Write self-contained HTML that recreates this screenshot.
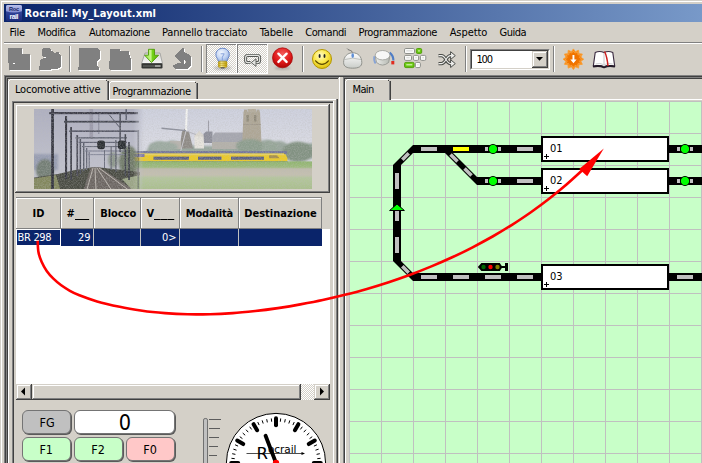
<!DOCTYPE html>
<html lang="it"><head><meta charset="utf-8"><title>Rocrail: My_Layout.xml</title>
<style>
html,body{margin:0;padding:0}
html{overflow:hidden;background:#d4d0c8}
body{width:702px;height:463px;overflow:hidden;position:relative;background:#d4d0c8}
#win{position:absolute;left:0;top:0;width:702px;height:463px;overflow:hidden;background:#d4d0c8;font-family:'DejaVu Sans Condensed','Liberation Sans',sans-serif;font-size:11px;color:#000}
#win>div,#win>span,#win>svg{position:absolute}
.t{white-space:nowrap;line-height:normal}
svg{overflow:visible}
</style></head><body>
<div id="win">
<div style="left:1px;top:1px;width:701px;height:1px;background:#fff;"></div>
<div style="left:1px;top:1px;width:1px;height:462px;background:#fff;"></div>
<div style="left:4px;top:4px;width:990px;height:18px;background:linear-gradient(to right,#0a246a,#a6caf0);"></div>
<span class="t" style="left:24.50px;top:7.00px;font-family:'DejaVu Sans Condensed','Liberation Sans',sans-serif;font-size:11px;font-weight:bold;color:#fff;letter-spacing:0.129px;">Rocrail: My_Layout.xml</span>
<span class="t" style="left:9.50px;top:26.00px;font-family:'DejaVu Sans Condensed','Liberation Sans',sans-serif;font-size:11px;font-weight:normal;color:#000;letter-spacing:-0.328px;">File</span>
<span class="t" style="left:37.60px;top:26.00px;font-family:'DejaVu Sans Condensed','Liberation Sans',sans-serif;font-size:11px;font-weight:normal;color:#000;letter-spacing:-0.425px;">Modifica</span>
<span class="t" style="left:89.00px;top:26.00px;font-family:'DejaVu Sans Condensed','Liberation Sans',sans-serif;font-size:11px;font-weight:normal;color:#000;letter-spacing:-0.405px;">Automazione</span>
<span class="t" style="left:162.00px;top:26.00px;font-family:'DejaVu Sans Condensed','Liberation Sans',sans-serif;font-size:11px;font-weight:normal;color:#000;letter-spacing:-0.183px;">Pannello tracciato</span>
<span class="t" style="left:259.70px;top:26.00px;font-family:'DejaVu Sans Condensed','Liberation Sans',sans-serif;font-size:11px;font-weight:normal;color:#000;letter-spacing:-0.161px;">Tabelle</span>
<span class="t" style="left:305.30px;top:26.00px;font-family:'DejaVu Sans Condensed','Liberation Sans',sans-serif;font-size:11px;font-weight:normal;color:#000;letter-spacing:-0.447px;">Comandi</span>
<span class="t" style="left:358.50px;top:26.00px;font-family:'DejaVu Sans Condensed','Liberation Sans',sans-serif;font-size:11px;font-weight:normal;color:#000;letter-spacing:-0.375px;">Programmazione</span>
<span class="t" style="left:449.70px;top:26.00px;font-family:'DejaVu Sans Condensed','Liberation Sans',sans-serif;font-size:11px;font-weight:normal;color:#000;letter-spacing:-0.085px;">Aspetto</span>
<span class="t" style="left:499.50px;top:26.00px;font-family:'DejaVu Sans Condensed','Liberation Sans',sans-serif;font-size:11px;font-weight:normal;color:#000;letter-spacing:-0.487px;">Guida</span>
<div style="left:4px;top:42px;width:698px;height:1px;background:#808080;"></div>
<div style="left:4px;top:43px;width:698px;height:1px;background:#fff;"></div>
<div style="left:69px;top:46px;width:1px;height:26px;background:#808080;"></div>
<div style="left:70px;top:46px;width:1px;height:26px;background:#fff;"></div>
<div style="left:201px;top:46px;width:1px;height:26px;background:#808080;"></div>
<div style="left:202px;top:46px;width:1px;height:26px;background:#fff;"></div>
<div style="left:302px;top:46px;width:1px;height:26px;background:#808080;"></div>
<div style="left:303px;top:46px;width:1px;height:26px;background:#fff;"></div>
<div style="left:465px;top:46px;width:1px;height:26px;background:#808080;"></div>
<div style="left:466px;top:46px;width:1px;height:26px;background:#fff;"></div>
<div style="left:553px;top:46px;width:1px;height:26px;background:#808080;"></div>
<div style="left:554px;top:46px;width:1px;height:26px;background:#fff;"></div>
<div style="left:4px;top:75px;width:698px;height:1px;background:#808080;"></div>
<div style="left:5px;top:76px;width:697px;height:1px;background:#404040;"></div>
<div style="left:4px;top:75px;width:1px;height:388px;background:#808080;"></div>
<div style="left:5px;top:76px;width:1px;height:387px;background:#404040;"></div>
<div style="left:6px;top:77px;width:333px;height:1px;background:#808080;"></div>
<div style="left:7px;top:78px;width:331px;height:1px;background:#404040;"></div>
<div style="left:6px;top:77px;width:1px;height:386px;background:#808080;"></div>
<div style="left:7px;top:78px;width:1px;height:385px;background:#404040;"></div>
<div style="left:339px;top:77px;width:1px;height:386px;background:#fff;"></div>
<div style="left:343px;top:77px;width:359px;height:1px;background:#808080;"></div>
<div style="left:344px;top:78px;width:358px;height:1px;background:#404040;"></div>
<div style="left:343px;top:77px;width:1px;height:386px;background:#808080;"></div>
<div style="left:344px;top:78px;width:1px;height:385px;background:#404040;"></div>
<div style="left:8px;top:81px;width:1px;height:382px;background:#fff;"></div>
<div style="left:10px;top:79px;width:96px;height:1px;background:#fff;"></div>
<div style="left:9px;top:80px;width:1px;height:1px;background:#fff;"></div>
<div style="left:107px;top:81px;width:1px;height:19px;background:#808080;"></div>
<div style="left:108px;top:81px;width:1px;height:19px;background:#404040;"></div>
<div style="left:106px;top:80px;width:1px;height:1px;background:#404040;"></div>
<span class="t" style="left:15.00px;top:83.00px;font-family:'DejaVu Sans Condensed','Liberation Sans',sans-serif;font-size:11px;font-weight:normal;color:#000;letter-spacing:-0.206px;">Locomotive attive</span>
<div style="left:109px;top:83px;width:1px;height:16px;background:#fff;"></div>
<div style="left:111px;top:81px;width:84px;height:1px;background:#fff;"></div>
<div style="left:110px;top:82px;width:1px;height:1px;background:#fff;"></div>
<div style="left:196px;top:83px;width:1px;height:16px;background:#808080;"></div>
<div style="left:197px;top:83px;width:1px;height:16px;background:#404040;"></div>
<div style="left:195px;top:82px;width:1px;height:1px;background:#404040;"></div>
<span class="t" style="left:112.50px;top:85.00px;font-family:'DejaVu Sans Condensed','Liberation Sans',sans-serif;font-size:11px;font-weight:normal;color:#000;letter-spacing:-0.406px;">Programmazione</span>
<div style="left:109px;top:99px;width:227px;height:1px;background:#fff;"></div>
<div style="left:336px;top:99px;width:1px;height:364px;background:#808080;"></div>
<div style="left:337px;top:99px;width:1px;height:364px;background:#404040;"></div>
<div style="left:12px;top:101px;width:321px;height:1px;background:#808080;"></div>
<div style="left:13px;top:102px;width:320px;height:1px;background:#404040;"></div>
<div style="left:12px;top:101px;width:1px;height:362px;background:#808080;"></div>
<div style="left:13px;top:102px;width:1px;height:361px;background:#404040;"></div>
<div style="left:333px;top:101px;width:1px;height:362px;background:#fff;"></div>
<div style="left:16px;top:105px;width:312px;height:1px;background:#fff;"></div>
<div style="left:16px;top:105px;width:1px;height:86px;background:#fff;"></div>
<div style="left:16px;top:191px;width:314px;height:1px;background:#808080;"></div>
<div style="left:15px;top:192px;width:315px;height:1px;background:#404040;"></div>
<div style="left:328px;top:105px;width:1px;height:87px;background:#808080;"></div>
<div style="left:329px;top:104px;width:1px;height:89px;background:#404040;"></div>
<svg style="left:34px;top:109px" width="278" height="80" viewBox="34 109 278 80" >
<defs>
<linearGradient id="pSkyR" x1="0" y1="0" x2="0" y2="1"><stop offset="0" stop-color="#cdd0de"/><stop offset=".6" stop-color="#d9dae3"/><stop offset="1" stop-color="#d6d8de"/></linearGradient>
<linearGradient id="pSkyL" x1="0" y1="0" x2="0" y2="1"><stop offset="0" stop-color="#adaebf"/><stop offset=".65" stop-color="#bfc0cc"/><stop offset="1" stop-color="#c4c5ce"/></linearGradient>
<linearGradient id="pField" x1="0" y1="0" x2="0" y2="1"><stop offset="0" stop-color="#8fb56c"/><stop offset=".19" stop-color="#9dbb7c"/><stop offset=".25" stop-color="#c0bcae"/><stop offset=".45" stop-color="#c4c0b0"/><stop offset=".55" stop-color="#b4c69c"/><stop offset="1" stop-color="#a8be8a"/></linearGradient>
<linearGradient id="pFade" x1="0" y1="0" x2="1" y2="0"><stop offset="0" stop-color="#fff"/><stop offset=".5" stop-color="#fff"/><stop offset="1" stop-color="#000"/></linearGradient>
<mask id="pMask" maskUnits="userSpaceOnUse" x="34" y="109" width="120" height="80"><rect x="34" y="109" width="92" height="80" fill="#fff"/><rect x="122" y="109" width="22" height="80" fill="url(#pFade)"/></mask>
<filter id="pb" x="-2%" y="-5%" width="104%" height="110%"><feGaussianBlur stdDeviation="0.55"/></filter>
<filter id="pb2" x="-5%" y="-20%" width="110%" height="140%"><feGaussianBlur stdDeviation="1.3"/></filter>
<filter id="grain" x="0" y="0" width="100%" height="100%"><feTurbulence type="fractalNoise" baseFrequency="0.75" numOctaves="2" seed="7" result="n"/><feColorMatrix type="matrix" values="0 0 0 0 0.5  0 0 0 0 0.5  0 0 0 0 0.5  1.6 1.6 1.6 0 -2.05"/></filter>
<clipPath id="pc"><rect x="34" y="109" width="278" height="80"/></clipPath>
</defs>
<g clip-path="url(#pc)">
<g filter="url(#pb)">
<rect x="120" y="105" width="200" height="60" fill="url(#pSkyR)" />
<g filter="url(#pb2)">
<path d="M146,152 L150,144 Q158,139 166,143 Q172,138 180,143 L196,146 L240,146 Q248,138 258,143 Q266,137 274,142 Q282,139 288,145 Q296,140 304,144 L314,143 L314,158 L146,158Z" fill="#98a69c"/>
</g>
<polygon points="179.5,148.5 182,131.5 189,131.5 193,148.5" fill="#8f8b86" />
<polygon points="182,132 185,128.5 188.3,132" fill="#8b8882" />
<line x1="186.8" y1="108" x2="186" y2="131" stroke="#f3f3f1" stroke-width="2.1"/>
<line x1="161.5" y1="128.2" x2="186" y2="130.6" stroke="#8a8d99" stroke-width="1.4"/>
<line x1="186" y1="131" x2="180.5" y2="152" stroke="#c9c9cf" stroke-width="1"/>
<line x1="186" y1="131" x2="197" y2="135" stroke="#b3b3bb" stroke-width="1"/>
<rect x="194.5" y="135.5" width="9.5" height="13" fill="#e7e4dd" />
<polygon points="193.8,136.5 199.3,130.8 204.8,136.5" fill="#dcd8d0" />
<polygon points="203.5,134 206,131.5 212.5,131.5 212.5,143 204,143" fill="#8e8f9a" />
<rect x="170" y="141" width="11" height="8" fill="#b8b4ae" />
<polygon points="212,149 212,137 215,132.5 243,132.5 243,149" fill="#a5a6af" />
<rect x="212" y="142" width="31" height="7" fill="#b3b0a9" />
<line x1="208.5" y1="120.5" x2="208.5" y2="132" stroke="#9c9ca6" stroke-width="1.1"/>
<polygon points="243.5,111.5 260,111.5 261.5,143 242.3,143" fill="#aea695" />
<rect x="244" y="109.6" width="3" height="2.5" fill="#aea695" />
<rect x="256.5" y="109.6" width="3" height="2.5" fill="#aea695" />
<rect x="247.5" y="108.6" width="8.5" height="3.5" fill="#b4ac9b" />
<rect x="246.4" y="115" width="2.4" height="6.5" fill="#8e8878" />
<rect x="254" y="115" width="2.4" height="6.5" fill="#8e8878" />
<rect x="243" y="124" width="18" height="1" fill="#a0988a" />
<g filter="url(#pb2)">
<ellipse cx="250" cy="146" rx="14" ry="7" fill="#8c9d8d"/>
<ellipse cx="270" cy="147" rx="8" ry="6" fill="#96a698"/>
<ellipse cx="298" cy="152" rx="16" ry="10" fill="#829282"/>
<ellipse cx="164" cy="147" rx="14" ry="5" fill="#9caaa0"/>
</g>
<rect x="128" y="151" width="159" height="2.8" fill="#74789a" />
<rect x="128" y="153.6" width="156" height="8" fill="#ecca28" />
<polygon points="283,153.6 285.6,154.6 287.4,158 287.4,161.6 283,161.6" fill="#ecca28" />
<rect x="128" y="153.6" width="156" height="1.6" fill="#e9d35e" />
<rect x="153.5" y="156.6" width="35.5" height="3.2" fill="#5c6082" />
<rect x="198" y="156.6" width="23.5" height="3.2" fill="#5c6082" />
<rect x="231" y="156.6" width="33" height="3.2" fill="#5c6082" />
<rect x="128" y="154" width="16.5" height="3" fill="#7c73a2" />
<polygon points="269,155.2 277,155.2 279.5,158.2 269,158.2" fill="#a58d48" />
<rect x="128" y="161.2" width="160" height="1" fill="#7d8662" />
<rect x="120" y="161.4" width="200" height="30" fill="url(#pField)" />
</g>
<g mask="url(#pMask)"><g filter="url(#pb)">
<rect x="30" y="105" width="120" height="90" fill="url(#pSkyL)" />
<g filter="url(#pb2)">
<rect x="32" y="154" width="26" height="16" fill="#979db2" />
<ellipse cx="45" cy="170" rx="9" ry="11" fill="#737e74"/>
<ellipse cx="129" cy="162" rx="10" ry="16" fill="#6f7a68"/>
<ellipse cx="113" cy="160" rx="5" ry="8" fill="#8d978c"/>
</g>
<polygon points="30,178 58,174 75,170 92,167.5 100,167.5 140,172 140,192 30,192" fill="#494b42" />
<polygon points="30,179 56,175 61,192 30,192" fill="#82875d" />
<polygon points="90.5,167.5 100,167.5 137,192 83,192" fill="#6c6662" />
<polygon points="122,179 140,175 140,192 134,192" fill="#9ba586" />
<line x1="93" y1="168" x2="86.8" y2="190" stroke="#c4beb8" stroke-width="0.9"/>
<line x1="95" y1="168" x2="96" y2="190" stroke="#c4beb8" stroke-width="0.9"/>
<line x1="97" y1="168" x2="111.5" y2="190" stroke="#c4beb8" stroke-width="0.9"/>
<line x1="99" y1="168" x2="128.5" y2="190" stroke="#c4beb8" stroke-width="0.9"/>
<rect x="89.5" y="109" width="3.6" height="30" fill="#9c9bab" />
<rect x="98" y="112" width="1.4" height="22" fill="#9293a3" />
<rect x="51.2" y="109" width="2.7" height="82" fill="#30323c" />
<rect x="49.2" y="112" width="88.8" height="2.2" fill="#3c3e49" />
<rect x="65" y="116" width="2.1" height="63" fill="#373943" />
<rect x="64" y="120.8" width="75" height="1.8" fill="#42444f" />
<rect x="70.2" y="127" width="1.8" height="53" fill="#3f414c" />
<rect x="69.2" y="130.4" width="69.8" height="1.5" fill="#4d4f5b" />
<rect x="76.4" y="135" width="1.7" height="41" fill="#484a56" />
<rect x="75.4" y="137.2" width="51.6" height="1.3" fill="#595c69" />
<rect x="79.6" y="139" width="1.5" height="35" fill="#50525f" />
<rect x="78.6" y="141.8" width="48.4" height="1.2" fill="#626574" />
<rect x="83" y="143" width="1.4" height="28" fill="#595c69" />
<rect x="82" y="146" width="45" height="1.1" fill="#6c6f7e" />
<rect x="86" y="148" width="1.3" height="22" fill="#636675" />
<rect x="85" y="150.5" width="42" height="1" fill="#76798c" />
<rect x="88.6" y="152" width="1.2" height="16" fill="#6e7180" />
<rect x="87.6" y="154.2" width="39.4" height="0.9" fill="#818496" />
<rect x="119.4" y="112" width="1.5" height="40" fill="#4a4c58" />
<rect x="124.6" y="134" width="1.5" height="42" fill="#43454f" />
<rect x="128.2" y="142" width="1.6" height="38" fill="#3e404a" />
<rect x="137.5" y="130" width="1.6" height="62" fill="#4a4c56" />
<rect x="110.6" y="146" width="1.1" height="24" fill="#5e616e" />
<rect x="115.3" y="140" width="1.2" height="32" fill="#595c69" />
<rect x="104" y="150" width="1" height="18" fill="#6a6d7c" />
<line x1="109" y1="114.5" x2="119.7" y2="127.5" stroke="#4d4f5c" stroke-width="0.9"/>
<rect x="125.5" y="109" width="1.4" height="11" fill="#555866" />
<rect x="97.2" y="140.6" width="7.8" height="8.6" rx="2.6" fill="#2c2e33"/>
<rect x="117.8" y="140.4" width="7.8" height="8.6" rx="2.6" fill="#2c2e33"/>
</g></g>
<rect x="34" y="109" width="278" height="80" filter="url(#grain)" opacity="0.3"/>
</g></svg>
<div style="left:16px;top:197px;width:306px;height:1px;background:#808080;"></div>
<div style="left:16px;top:198px;width:44px;height:1px;background:#fff;"></div>
<div style="left:16px;top:198px;width:1px;height:30px;background:#fff;"></div>
<div style="left:60px;top:198px;width:1px;height:31px;background:#808080;"></div>
<div style="left:61px;top:198px;width:32px;height:1px;background:#fff;"></div>
<div style="left:61px;top:198px;width:1px;height:30px;background:#fff;"></div>
<div style="left:93px;top:198px;width:1px;height:31px;background:#808080;"></div>
<div style="left:94px;top:198px;width:46px;height:1px;background:#fff;"></div>
<div style="left:94px;top:198px;width:1px;height:30px;background:#fff;"></div>
<div style="left:140px;top:198px;width:1px;height:31px;background:#808080;"></div>
<div style="left:141px;top:198px;width:38px;height:1px;background:#fff;"></div>
<div style="left:141px;top:198px;width:1px;height:30px;background:#fff;"></div>
<div style="left:179px;top:198px;width:1px;height:31px;background:#808080;"></div>
<div style="left:180px;top:198px;width:58px;height:1px;background:#fff;"></div>
<div style="left:180px;top:198px;width:1px;height:30px;background:#fff;"></div>
<div style="left:238px;top:198px;width:1px;height:31px;background:#808080;"></div>
<div style="left:239px;top:198px;width:82px;height:1px;background:#fff;"></div>
<div style="left:239px;top:198px;width:1px;height:30px;background:#fff;"></div>
<div style="left:321px;top:198px;width:1px;height:31px;background:#808080;"></div>
<div style="left:16px;top:228px;width:306px;height:1px;background:#808080;"></div>
<div style="left:16px;top:229px;width:314px;height:155px;background:#fff;"></div>
<div style="left:16px;top:229px;width:306px;height:17px;background:#0a246a;"></div>
<div style="left:60px;top:229px;width:1px;height:17px;background:#c0c0c0;"></div>
<div style="left:93px;top:229px;width:1px;height:17px;background:#c0c0c0;"></div>
<div style="left:140px;top:229px;width:1px;height:17px;background:#c0c0c0;"></div>
<div style="left:179px;top:229px;width:1px;height:17px;background:#c0c0c0;"></div>
<div style="left:238px;top:229px;width:1px;height:17px;background:#c0c0c0;"></div>
<div style="left:16px;top:229px;width:45px;height:17px;background:transparent;box-sizing:border-box;border:1px solid #fff"></div>
<div style="left:16px;top:384px;width:314px;height:16px;background:#d4d0c8;"></div>
<div style="left:301px;top:384px;width:13px;height:16px;background:repeating-conic-gradient(#fff 0 25%,#d4d0c8 0 50%) 0 0/2px 2px"></div>
<div style="left:16px;top:384px;width:15px;height:1px;background:#d4d0c8;"></div>
<div style="left:16px;top:384px;width:1px;height:15px;background:#d4d0c8;"></div>
<div style="left:17px;top:385px;width:13px;height:1px;background:#fff;"></div>
<div style="left:17px;top:385px;width:1px;height:13px;background:#fff;"></div>
<div style="left:17px;top:398px;width:14px;height:1px;background:#808080;"></div>
<div style="left:30px;top:385px;width:1px;height:14px;background:#808080;"></div>
<div style="left:16px;top:399px;width:16px;height:1px;background:#404040;"></div>
<div style="left:31px;top:384px;width:1px;height:16px;background:#404040;"></div>
<div style="left:32px;top:384px;width:268px;height:1px;background:#d4d0c8;"></div>
<div style="left:32px;top:384px;width:1px;height:15px;background:#d4d0c8;"></div>
<div style="left:33px;top:385px;width:266px;height:1px;background:#fff;"></div>
<div style="left:33px;top:385px;width:1px;height:13px;background:#fff;"></div>
<div style="left:33px;top:398px;width:267px;height:1px;background:#808080;"></div>
<div style="left:299px;top:385px;width:1px;height:14px;background:#808080;"></div>
<div style="left:32px;top:399px;width:269px;height:1px;background:#404040;"></div>
<div style="left:300px;top:384px;width:1px;height:16px;background:#404040;"></div>
<div style="left:314px;top:384px;width:15px;height:1px;background:#d4d0c8;"></div>
<div style="left:314px;top:384px;width:1px;height:15px;background:#d4d0c8;"></div>
<div style="left:315px;top:385px;width:13px;height:1px;background:#fff;"></div>
<div style="left:315px;top:385px;width:1px;height:13px;background:#fff;"></div>
<div style="left:315px;top:398px;width:14px;height:1px;background:#808080;"></div>
<div style="left:328px;top:385px;width:1px;height:14px;background:#808080;"></div>
<div style="left:314px;top:399px;width:16px;height:1px;background:#404040;"></div>
<div style="left:329px;top:384px;width:1px;height:16px;background:#404040;"></div>
<svg style="left:8px;top:380px" width="330" height="83" viewBox="8 380 330 83" >
<polygon points="25,387.5 25,395.5 21,391.5" fill="#000" />
<polygon points="320,387.5 320,395.5 324,391.5" fill="#000" />
<rect x="203.5" y="418.5" width="4" height="50" rx="1.6" fill="#c0c0c0" stroke="#707070" stroke-width="1"/>
<rect x="209" y="419" width="12" height="1" fill="#5c5c5c" shape-rendering="crispEdges"/>
<rect x="209" y="428" width="11" height="1" fill="#5c5c5c" shape-rendering="crispEdges"/>
<rect x="209" y="437" width="10" height="1" fill="#5c5c5c" shape-rendering="crispEdges"/>
<rect x="209" y="446" width="9" height="1" fill="#5c5c5c" shape-rendering="crispEdges"/>
<rect x="209" y="455" width="8" height="1" fill="#5c5c5c" shape-rendering="crispEdges"/>
<circle cx="276" cy="463" r="49.6" fill="#fff" stroke="#000" stroke-width="1"/>
<line x1="276.00" y1="425.20" x2="276.00" y2="418.20" stroke="#000" stroke-width="4" stroke-linecap="round"/>
<line x1="280.34" y1="421.73" x2="280.68" y2="418.45" stroke="#000" stroke-width="1"/>
<line x1="284.63" y1="422.41" x2="285.31" y2="419.18" stroke="#000" stroke-width="1"/>
<line x1="288.82" y1="423.53" x2="289.84" y2="420.39" stroke="#000" stroke-width="1"/>
<line x1="292.88" y1="425.09" x2="294.22" y2="422.07" stroke="#000" stroke-width="1"/>
<line x1="294.90" y1="430.26" x2="298.40" y2="424.20" stroke="#000" stroke-width="4" stroke-linecap="round"/>
<line x1="300.39" y1="429.43" x2="302.33" y2="426.76" stroke="#000" stroke-width="1"/>
<line x1="303.77" y1="432.16" x2="305.98" y2="429.71" stroke="#000" stroke-width="1"/>
<line x1="306.84" y1="435.23" x2="309.29" y2="433.02" stroke="#000" stroke-width="1"/>
<line x1="309.57" y1="438.61" x2="312.24" y2="436.67" stroke="#000" stroke-width="1"/>
<line x1="308.74" y1="444.10" x2="314.80" y2="440.60" stroke="#000" stroke-width="4" stroke-linecap="round"/>
<line x1="313.91" y1="446.12" x2="316.93" y2="444.78" stroke="#000" stroke-width="1"/>
<line x1="315.47" y1="450.18" x2="318.61" y2="449.16" stroke="#000" stroke-width="1"/>
<line x1="316.59" y1="454.37" x2="319.82" y2="453.69" stroke="#000" stroke-width="1"/>
<line x1="317.27" y1="458.66" x2="320.55" y2="458.32" stroke="#000" stroke-width="1"/>
<line x1="313.80" y1="463.00" x2="320.80" y2="463.00" stroke="#000" stroke-width="4" stroke-linecap="round"/>
<line x1="317.27" y1="467.34" x2="320.55" y2="467.68" stroke="#000" stroke-width="1"/>
<line x1="316.59" y1="471.63" x2="319.82" y2="472.31" stroke="#000" stroke-width="1"/>
<line x1="315.47" y1="475.82" x2="318.61" y2="476.84" stroke="#000" stroke-width="1"/>
<line x1="313.91" y1="479.88" x2="316.93" y2="481.22" stroke="#000" stroke-width="1"/>
<line x1="308.74" y1="481.90" x2="314.80" y2="485.40" stroke="#000" stroke-width="4" stroke-linecap="round"/>
<line x1="309.57" y1="487.39" x2="312.24" y2="489.33" stroke="#000" stroke-width="1"/>
<line x1="306.84" y1="490.77" x2="309.29" y2="492.98" stroke="#000" stroke-width="1"/>
<line x1="303.77" y1="493.84" x2="305.98" y2="496.29" stroke="#000" stroke-width="1"/>
<line x1="300.39" y1="496.57" x2="302.33" y2="499.24" stroke="#000" stroke-width="1"/>
<line x1="294.90" y1="495.74" x2="298.40" y2="501.80" stroke="#000" stroke-width="4" stroke-linecap="round"/>
<line x1="292.88" y1="500.91" x2="294.22" y2="503.93" stroke="#000" stroke-width="1"/>
<line x1="288.82" y1="502.47" x2="289.84" y2="505.61" stroke="#000" stroke-width="1"/>
<line x1="284.63" y1="503.59" x2="285.31" y2="506.82" stroke="#000" stroke-width="1"/>
<line x1="280.34" y1="504.27" x2="280.68" y2="507.55" stroke="#000" stroke-width="1"/>
<line x1="276.00" y1="500.80" x2="276.00" y2="507.80" stroke="#000" stroke-width="4" stroke-linecap="round"/>
<line x1="271.66" y1="504.27" x2="271.32" y2="507.55" stroke="#000" stroke-width="1"/>
<line x1="267.37" y1="503.59" x2="266.69" y2="506.82" stroke="#000" stroke-width="1"/>
<line x1="263.18" y1="502.47" x2="262.16" y2="505.61" stroke="#000" stroke-width="1"/>
<line x1="259.12" y1="500.91" x2="257.78" y2="503.93" stroke="#000" stroke-width="1"/>
<line x1="257.10" y1="495.74" x2="253.60" y2="501.80" stroke="#000" stroke-width="4" stroke-linecap="round"/>
<line x1="251.61" y1="496.57" x2="249.67" y2="499.24" stroke="#000" stroke-width="1"/>
<line x1="248.23" y1="493.84" x2="246.02" y2="496.29" stroke="#000" stroke-width="1"/>
<line x1="245.16" y1="490.77" x2="242.71" y2="492.98" stroke="#000" stroke-width="1"/>
<line x1="242.43" y1="487.39" x2="239.76" y2="489.33" stroke="#000" stroke-width="1"/>
<line x1="243.26" y1="481.90" x2="237.20" y2="485.40" stroke="#000" stroke-width="4" stroke-linecap="round"/>
<line x1="238.09" y1="479.88" x2="235.07" y2="481.22" stroke="#000" stroke-width="1"/>
<line x1="236.53" y1="475.82" x2="233.39" y2="476.84" stroke="#000" stroke-width="1"/>
<line x1="235.41" y1="471.63" x2="232.18" y2="472.31" stroke="#000" stroke-width="1"/>
<line x1="234.73" y1="467.34" x2="231.45" y2="467.68" stroke="#000" stroke-width="1"/>
<line x1="238.20" y1="463.00" x2="231.20" y2="463.00" stroke="#000" stroke-width="4" stroke-linecap="round"/>
<line x1="234.73" y1="458.66" x2="231.45" y2="458.32" stroke="#000" stroke-width="1"/>
<line x1="235.41" y1="454.37" x2="232.18" y2="453.69" stroke="#000" stroke-width="1"/>
<line x1="236.53" y1="450.18" x2="233.39" y2="449.16" stroke="#000" stroke-width="1"/>
<line x1="238.09" y1="446.12" x2="235.07" y2="444.78" stroke="#000" stroke-width="1"/>
<line x1="243.26" y1="444.10" x2="237.20" y2="440.60" stroke="#000" stroke-width="4" stroke-linecap="round"/>
<line x1="242.43" y1="438.61" x2="239.76" y2="436.67" stroke="#000" stroke-width="1"/>
<line x1="245.16" y1="435.23" x2="242.71" y2="433.02" stroke="#000" stroke-width="1"/>
<line x1="248.23" y1="432.16" x2="246.02" y2="429.71" stroke="#000" stroke-width="1"/>
<line x1="251.61" y1="429.43" x2="249.67" y2="426.76" stroke="#000" stroke-width="1"/>
<line x1="257.10" y1="430.26" x2="253.60" y2="424.20" stroke="#000" stroke-width="4" stroke-linecap="round"/>
<line x1="259.12" y1="425.09" x2="257.78" y2="422.07" stroke="#000" stroke-width="1"/>
<line x1="263.18" y1="423.53" x2="262.16" y2="420.39" stroke="#000" stroke-width="1"/>
<line x1="267.37" y1="422.41" x2="266.69" y2="419.18" stroke="#000" stroke-width="1"/>
<line x1="271.66" y1="421.73" x2="271.32" y2="418.45" stroke="#000" stroke-width="1"/>
<text x="256.5" y="459" font-family="'DejaVu Sans','Liberation Sans',sans-serif" font-size="16.5" fill="#000">R</text>
<text x="268" y="452.5" font-family="'DejaVu Sans','Liberation Sans',sans-serif" font-size="10.5" fill="#000" textLength="28.5">ocrail</text>
<line x1="246.5" y1="453.5" x2="303" y2="453.5" stroke="#000" stroke-width="0.7"/>
<polygon points="305,453.5 301.5,452.1 301.5,454.9" fill="#000" />
<line x1="276" y1="463" x2="265.6" y2="435.8" stroke="#000" stroke-width="3.8" stroke-linecap="round"/>
<circle cx="276" cy="463" r="3.2" fill="#ff0000"/>
</svg>
<div style="left:22px;top:410px;width:49px;height:24px;background:#c0c0c0;box-sizing:border-box;border:1px solid #747474;border-radius:6px;box-shadow:1px 1px 0 #5a5a5a"></div>
<div style="left:74px;top:410px;width:101px;height:24px;background:#fff;box-sizing:border-box;border:1px solid #747474;border-radius:6px;box-shadow:1px 1px 0 #5a5a5a"></div>
<div style="left:22px;top:437px;width:49px;height:24px;background:#c8ffc8;box-sizing:border-box;border:1px solid #747474;border-radius:6px;box-shadow:1px 1px 0 #5a5a5a"></div>
<div style="left:74px;top:437px;width:49px;height:24px;background:#c8ffc8;box-sizing:border-box;border:1px solid #747474;border-radius:6px;box-shadow:1px 1px 0 #5a5a5a"></div>
<div style="left:126px;top:437px;width:49px;height:24px;background:#ffc8c8;box-sizing:border-box;border:1px solid #747474;border-radius:6px;box-shadow:1px 1px 0 #5a5a5a"></div>
<span class="t" style="left:39.41px;top:415.00px;font-family:'DejaVu Sans Condensed','Liberation Sans',sans-serif;font-size:12.5px;font-weight:normal;color:#000;">FG</span>
<span class="t" style="left:39.39px;top:442.00px;font-family:'DejaVu Sans Condensed','Liberation Sans',sans-serif;font-size:12.5px;font-weight:normal;color:#000;">F1</span>
<span class="t" style="left:91.29px;top:442.00px;font-family:'DejaVu Sans Condensed','Liberation Sans',sans-serif;font-size:12.5px;font-weight:normal;color:#000;">F2</span>
<span class="t" style="left:143.19px;top:442.00px;font-family:'DejaVu Sans Condensed','Liberation Sans',sans-serif;font-size:12.5px;font-weight:normal;color:#000;">F0</span>
<span class="t" style="left:118.64px;top:410.00px;font-family:'DejaVu Sans Condensed','Liberation Sans',sans-serif;font-size:21.5px;font-weight:normal;color:#000;">0</span>
<div style="left:345px;top:81px;width:1px;height:382px;background:#fff;"></div>
<div style="left:347px;top:79px;width:41px;height:1px;background:#fff;"></div>
<div style="left:346px;top:80px;width:1px;height:1px;background:#fff;"></div>
<div style="left:389px;top:81px;width:1px;height:19px;background:#808080;"></div>
<div style="left:390px;top:81px;width:1px;height:19px;background:#404040;"></div>
<div style="left:388px;top:80px;width:1px;height:1px;background:#404040;"></div>
<div style="left:391px;top:99px;width:311px;height:1px;background:#fff;"></div>
<span class="t" style="left:352.50px;top:83.00px;font-family:'DejaVu Sans Condensed','Liberation Sans',sans-serif;font-size:11px;font-weight:normal;color:#000;letter-spacing:-0.647px;">Main</span>
<svg style="left:349px;top:101px" width="353" height="362" viewBox="349 101 353 362" >
<g shape-rendering="crispEdges">
<rect x="349" y="101" width="353" height="362" fill="#c8ffc8" />
<rect x="349" y="101" width="1" height="362" fill="#c0c0c0" />
<rect x="381" y="101" width="1" height="362" fill="#c0c0c0" />
<rect x="413" y="101" width="1" height="362" fill="#c0c0c0" />
<rect x="445" y="101" width="1" height="362" fill="#c0c0c0" />
<rect x="477" y="101" width="1" height="362" fill="#c0c0c0" />
<rect x="509" y="101" width="1" height="362" fill="#c0c0c0" />
<rect x="541" y="101" width="1" height="362" fill="#c0c0c0" />
<rect x="573" y="101" width="1" height="362" fill="#c0c0c0" />
<rect x="605" y="101" width="1" height="362" fill="#c0c0c0" />
<rect x="637" y="101" width="1" height="362" fill="#c0c0c0" />
<rect x="669" y="101" width="1" height="362" fill="#c0c0c0" />
<rect x="701" y="101" width="1" height="362" fill="#c0c0c0" />
<rect x="349" y="101" width="353" height="1" fill="#c0c0c0" />
<rect x="349" y="133" width="353" height="1" fill="#c0c0c0" />
<rect x="349" y="165" width="353" height="1" fill="#c0c0c0" />
<rect x="349" y="197" width="353" height="1" fill="#c0c0c0" />
<rect x="349" y="229" width="353" height="1" fill="#c0c0c0" />
<rect x="349" y="261" width="353" height="1" fill="#c0c0c0" />
<rect x="349" y="293" width="353" height="1" fill="#c0c0c0" />
<rect x="349" y="325" width="353" height="1" fill="#c0c0c0" />
<rect x="349" y="357" width="353" height="1" fill="#c0c0c0" />
<rect x="349" y="389" width="353" height="1" fill="#c0c0c0" />
<rect x="349" y="421" width="353" height="1" fill="#c0c0c0" />
<rect x="349" y="453" width="353" height="1" fill="#c0c0c0" />
</g>
<polygon points="541,145 413,145 393,165 393,261 413,281 541,281 541,273 413,273 401,261 401,165 413,153 541,153" fill="#000" />
<polygon points="445,153 453,153 477,177 541,177 541,185 477,185" fill="#000" />
<rect x="669" y="145" width="33" height="8" fill="#000" shape-rendering="crispEdges"/>
<rect x="669" y="177" width="33" height="8" fill="#000" shape-rendering="crispEdges"/>
<rect x="669" y="273" width="33" height="8" fill="#000" shape-rendering="crispEdges"/>
<g shape-rendering="crispEdges">
<rect x="421" y="147" width="16" height="4" fill="#c0c0c0" />
<rect x="517" y="147" width="16" height="4" fill="#c0c0c0" />
<rect x="453" y="147" width="16" height="4" fill="#ffff00" />
<rect x="517" y="179" width="16" height="4" fill="#c0c0c0" />
<rect x="421" y="275" width="16" height="4" fill="#c0c0c0" />
<rect x="453" y="275" width="16" height="4" fill="#c0c0c0" />
<rect x="485" y="275" width="16" height="4" fill="#c0c0c0" />
<rect x="517" y="275" width="16" height="4" fill="#c0c0c0" />
<rect x="677" y="275" width="16" height="4" fill="#c0c0c0" />
<rect x="395" y="173" width="4" height="16" fill="#c0c0c0" />
<rect x="395" y="211" width="4" height="10" fill="#c0c0c0" />
<rect x="395" y="237" width="4" height="16" fill="#c0c0c0" />
<rect x="485" y="147" width="3" height="4" fill="#c0c0c0" />
<rect x="498" y="147" width="3" height="4" fill="#c0c0c0" />
<rect x="485" y="179" width="3" height="4" fill="#c0c0c0" />
<rect x="498" y="179" width="3" height="4" fill="#c0c0c0" />
<rect x="677" y="147" width="3" height="4" fill="#c0c0c0" />
<rect x="690" y="147" width="3" height="4" fill="#c0c0c0" />
<rect x="677" y="179" width="3" height="4" fill="#c0c0c0" />
<rect x="690" y="179" width="3" height="4" fill="#c0c0c0" />
</g>
<line x1="402.3" y1="159.7" x2="408.7" y2="153.3" stroke="#c0c0c0" stroke-width="3.6"/>
<line x1="402.3" y1="266.3" x2="408.7" y2="272.7" stroke="#c0c0c0" stroke-width="3.6"/>
<line x1="450.5" y1="154.5" x2="457.5" y2="161.5" stroke="#c0c0c0" stroke-width="3.6"/>
<line x1="464.5" y1="168.5" x2="471.5" y2="175.5" stroke="#c0c0c0" stroke-width="3.6"/>
<circle cx="493" cy="149" r="4.6" fill="#00ff00" stroke="#000" stroke-width="0.9"/>
<circle cx="493" cy="181" r="4.6" fill="#00ff00" stroke="#000" stroke-width="0.9"/>
<circle cx="685" cy="149" r="4.6" fill="#00ff00" stroke="#000" stroke-width="0.9"/>
<circle cx="685" cy="181" r="4.6" fill="#00ff00" stroke="#000" stroke-width="0.9"/>
<polygon points="397,204 389.6,210.5 404.4,210.5" fill="#00ff00" stroke="#000" stroke-width="1"/>
<polygon points="477.8,267 481.4,263 499.8,263 502.4,267 499.8,271 481.4,271" fill="#000" />
<rect x="501" y="266" width="5" height="2" fill="#000" />
<rect x="505" y="263" width="3" height="8" fill="#000" />
<circle cx="483.5" cy="267" r="2.2" fill="#006400"/>
<circle cx="490.5" cy="267" r="2.2" fill="#ff0000"/>
<circle cx="497.5" cy="267" r="2.2" fill="#808000"/>
<rect x="542" y="137" width="126" height="24" fill="#fff" stroke="#000" stroke-width="2" shape-rendering="crispEdges"/>
<rect x="544" y="156" width="5" height="1" fill="#000" shape-rendering="crispEdges"/>
<rect x="546" y="154" width="1" height="5" fill="#000" shape-rendering="crispEdges"/>
<rect x="542" y="169" width="126" height="24" fill="#fff" stroke="#000" stroke-width="2" shape-rendering="crispEdges"/>
<rect x="544" y="188" width="5" height="1" fill="#000" shape-rendering="crispEdges"/>
<rect x="546" y="186" width="1" height="5" fill="#000" shape-rendering="crispEdges"/>
<rect x="542" y="265" width="126" height="24" fill="#fff" stroke="#000" stroke-width="2" shape-rendering="crispEdges"/>
<rect x="544" y="284" width="5" height="1" fill="#000" shape-rendering="crispEdges"/>
<rect x="546" y="282" width="1" height="5" fill="#000" shape-rendering="crispEdges"/>
<text x="550" y="152" font-family="'DejaVu Sans Condensed','Liberation Sans',sans-serif" font-size="11" fill="#000">01</text>
<text x="550" y="184" font-family="'DejaVu Sans Condensed','Liberation Sans',sans-serif" font-size="11" fill="#000">02</text>
<text x="550" y="280" font-family="'DejaVu Sans Condensed','Liberation Sans',sans-serif" font-size="11" fill="#000">03</text>
</svg>
<span class="t" style="left:32.55px;top:207.00px;font-family:'DejaVu Sans Condensed','Liberation Sans',sans-serif;font-size:11px;font-weight:bold;color:#000;">ID</span>
<span class="t" style="left:66.40px;top:207.00px;font-family:'DejaVu Sans Condensed','Liberation Sans',sans-serif;font-size:11px;font-weight:bold;color:#000;">#<span style="display:inline-block;transform:scaleX(1.44);transform-origin:0 50%">__</span></span>
<span class="t" style="left:100.20px;top:207.00px;font-family:'DejaVu Sans Condensed','Liberation Sans',sans-serif;font-size:11px;font-weight:bold;color:#000;letter-spacing:-0.053px;">Blocco</span>
<span class="t" style="left:146.50px;top:207.00px;font-family:'DejaVu Sans Condensed','Liberation Sans',sans-serif;font-size:11px;font-weight:bold;color:#000;">V<span style="display:inline-block;transform:scaleX(1.36);transform-origin:0 50%">___</span></span>
<span class="t" style="left:185.75px;top:207.00px;font-family:'DejaVu Sans Condensed','Liberation Sans',sans-serif;font-size:11px;font-weight:bold;color:#000;letter-spacing:-0.158px;">Modalità</span>
<span class="t" style="left:244.25px;top:207.00px;font-family:'DejaVu Sans Condensed','Liberation Sans',sans-serif;font-size:11px;font-weight:bold;color:#000;letter-spacing:0.010px;">Destinazione</span>
<span class="t" style="left:17.60px;top:231.00px;font-family:'DejaVu Sans Condensed','Liberation Sans',sans-serif;font-size:11px;font-weight:normal;color:#fff;letter-spacing:-0.341px;">BR 298</span>
<span class="t" style="left:77.91px;top:231.00px;font-family:'DejaVu Sans Condensed','Liberation Sans',sans-serif;font-size:11px;font-weight:normal;color:#fff;">29</span>
<span class="t" style="left:161.91px;top:231.00px;font-family:'DejaVu Sans Condensed','Liberation Sans',sans-serif;font-size:11px;font-weight:normal;color:#fff;">0></span>
<div style="left:470px;top:49px;width:80px;height:21px;background:#fff;box-sizing:border-box;border:1px solid;border-color:#808080 #fff #fff #808080"></div>
<div style="left:471px;top:50px;width:78px;height:19px;background:#fff;box-sizing:border-box;border:1px solid;border-color:#404040 #d4d0c8 #d4d0c8 #404040"></div>
<div style="left:532px;top:51px;width:16px;height:17px;background:#d4d0c8;"></div>
<div style="left:532px;top:51px;width:15px;height:1px;background:#d4d0c8;"></div>
<div style="left:532px;top:51px;width:1px;height:16px;background:#d4d0c8;"></div>
<div style="left:533px;top:52px;width:13px;height:1px;background:#fff;"></div>
<div style="left:533px;top:52px;width:1px;height:14px;background:#fff;"></div>
<div style="left:533px;top:66px;width:14px;height:1px;background:#808080;"></div>
<div style="left:546px;top:52px;width:1px;height:15px;background:#808080;"></div>
<div style="left:532px;top:67px;width:16px;height:1px;background:#404040;"></div>
<div style="left:547px;top:51px;width:1px;height:17px;background:#404040;"></div>
<span class="t" style="left:476.50px;top:53.00px;font-family:'DejaVu Sans Condensed','Liberation Sans',sans-serif;font-size:11px;font-weight:normal;color:#000;letter-spacing:-1.195px;">100</span>
<svg style="left:6px;top:5px" width="16" height="16" viewBox="6 5 16 16" >
<defs><linearGradient id="tiA" x1="0" y1="0" x2="0" y2="1"><stop offset="0" stop-color="#b9c0ea"/><stop offset="1" stop-color="#7f8bd0"/></linearGradient>
<linearGradient id="tiB" x1="0" y1="0" x2="0" y2="1"><stop offset="0" stop-color="#3f55ad"/><stop offset="1" stop-color="#1c2c7c"/></linearGradient></defs>
<rect x="6" y="5" width="16" height="16" rx="1.6" fill="url(#tiB)"/>
<path d="M6,6.6 Q6,5 7.6,5 L20.4,5 Q22,5 22,6.6 L22,11.2 Q14,13.6 6,11.2Z" fill="url(#tiA)"/>
<text x="14" y="11" font-family="'Liberation Sans',sans-serif" font-weight="bold" font-size="5.6" fill="#1a2466" text-anchor="middle" textLength="10">Roc</text>
<text x="14" y="19" font-family="'Liberation Sans',sans-serif" font-weight="bold" font-size="7" fill="#f4f6ff" text-anchor="middle" textLength="9">rail</text>
</svg>
<svg style="left:0px;top:44px" width="702" height="31" viewBox="0 44 702 31" >
<defs>
<linearGradient id="gArrow" x1="0" y1="0" x2="1" y2="0"><stop offset="0" stop-color="#8ae234"/><stop offset=".45" stop-color="#c9f58f"/><stop offset=".55" stop-color="#73d216"/><stop offset="1" stop-color="#5cb40c"/></linearGradient>
<linearGradient id="gDrive" x1="0" y1="0" x2="0" y2="1"><stop offset="0" stop-color="#d6d6d4"/><stop offset="1" stop-color="#f6f6f5"/></linearGradient>
<radialGradient id="gBulb" cx=".4" cy=".35" r=".7"><stop offset="0" stop-color="#f4f8ff"/><stop offset=".6" stop-color="#c3d4f2"/><stop offset="1" stop-color="#8fabdf"/></radialGradient>
<linearGradient id="gBase" x1="0" y1="0" x2="1" y2="0"><stop offset="0" stop-color="#c4a000"/><stop offset=".35" stop-color="#fdf2a0"/><stop offset="1" stop-color="#c4a000"/></linearGradient>
<radialGradient id="gRed" cx=".5" cy=".3" r=".75"><stop offset="0" stop-color="#f25a5a"/><stop offset=".55" stop-color="#e01b1b"/><stop offset="1" stop-color="#a40000"/></radialGradient>
<radialGradient id="gSmile" cx=".42" cy=".32" r=".75"><stop offset="0" stop-color="#fffbd0"/><stop offset=".45" stop-color="#fce94f"/><stop offset="1" stop-color="#d9b800"/></radialGradient>
<linearGradient id="gMouse" x1="0" y1="0" x2="0" y2="1"><stop offset="0" stop-color="#ffffff"/><stop offset="1" stop-color="#c9ccc8"/></linearGradient>
<linearGradient id="gKnob" x1="0" y1="0" x2="1" y2="0"><stop offset="0" stop-color="#eeefec"/><stop offset="1" stop-color="#b4b7b0"/></linearGradient>
<linearGradient id="gGreen" x1="0" y1="0" x2="0" y2="1"><stop offset="0" stop-color="#73d216"/><stop offset="1" stop-color="#5fbf0c"/></linearGradient>
<radialGradient id="gStar" cx=".5" cy=".5" r=".55"><stop offset="0" stop-color="#e86c00"/><stop offset=".7" stop-color="#f57900"/><stop offset="1" stop-color="#f98e1c"/></radialGradient>
<pattern id="chk" width="2" height="2" patternUnits="userSpaceOnUse"><rect width="2" height="2" fill="#d4d0c8"/><rect width="1" height="1" fill="#fff"/><rect x="1" y="1" width="1" height="1" fill="#fff"/></pattern>
<filter id="b1"><feGaussianBlur stdDeviation="0.8"/></filter>
</defs>
<path d="M8,48 L22,48 L22,54 L30,54 L30,70 L9,70 L9,64 L8,63Z M13,63 L15,63 L15,64 L13,64Z" fill="#fff" fill-rule="evenodd" transform="translate(1,1)" shape-rendering="crispEdges"/><path d="M8,48 L22,48 L22,54 L30,54 L30,70 L9,70 L9,64 L8,63Z M13,63 L15,63 L15,64 L13,64Z" fill="#808080" fill-rule="evenodd" shape-rendering="crispEdges"/>
<path d="M43,48 L50,48 L50,49 L51,49 L51,51 L53,51 L53,52 L54,52 L54,53 L56,53 L56,52 L59,52 L59,54 L60,54 L60,55 L61,55 L61,67 L60,67 L60,68 L58,68 L58,69 L51,69 L51,70 L39,70 L39,66 L40,66 L40,60 L41,60 L41,59 L43,59 L43,58 L46,58 L46,57 L43,57 L43,56 L42,56 L42,49 L43,49Z" fill="#fff" fill-rule="evenodd" transform="translate(1,1)" shape-rendering="crispEdges"/><path d="M43,48 L50,48 L50,49 L51,49 L51,51 L53,51 L53,52 L54,52 L54,53 L56,53 L56,52 L59,52 L59,54 L60,54 L60,55 L61,55 L61,67 L60,67 L60,68 L58,68 L58,69 L51,69 L51,70 L39,70 L39,66 L40,66 L40,60 L41,60 L41,59 L43,59 L43,58 L46,58 L46,57 L43,57 L43,56 L42,56 L42,49 L43,49Z" fill="#808080" fill-rule="evenodd" shape-rendering="crispEdges"/>
<path d="M79,48 L97,48 L100,51 L100,58 L97,61 L97,66 L99,68 L99,70 L78,70 L78,67 L79,66Z" fill="#fff" fill-rule="evenodd" transform="translate(1,1)" shape-rendering="crispEdges"/><path d="M79,48 L97,48 L100,51 L100,58 L97,61 L97,66 L99,68 L99,70 L78,70 L78,67 L79,66Z" fill="#808080" fill-rule="evenodd" shape-rendering="crispEdges"/>
<path d="M110,49 L120,49 L120,51 L129,51 L129,53 L131,60 L131,69 L130,70 L110,70 L109,69 L109,61 L110,60Z" fill="#fff" fill-rule="evenodd" transform="translate(1,1)" shape-rendering="crispEdges"/><path d="M110,49 L120,49 L120,51 L129,51 L129,53 L131,60 L131,69 L130,70 L110,70 L109,69 L109,61 L110,60Z" fill="#808080" fill-rule="evenodd" shape-rendering="crispEdges"/>
<polygon points="145,53 160,53 162.5,63.5 141.5,63.5" fill="url(#gDrive)" stroke="#9a9a98" stroke-width="0.8"/>
<rect x="141.5" y="63.3" width="21" height="5.2" rx="1.2" fill="#353634"/>
<rect x="143" y="65.5" width="18" height="1" fill="#6e706c" />
<rect x="155" y="65.3" width="5.5" height="1.4" fill="#b8bab6" />
<polygon points="148.5,49.3 154.5,49.3 154.5,55.2 158.6,55.2 151.5,62.6 144.6,55.2 148.5,55.2" fill="url(#gArrow)" stroke="#4e9a06" stroke-width="0.9" stroke-linejoin="round"/>
<path d="M182,48 L184,48 L184,52 L188,54 L191,57 L191,65 L188,69 L175,69 L172,66 L178,63 L181.5,63 L174,56Z M184,60 L184,64 L186.5,62Z" fill="#fff" fill-rule="evenodd" transform="translate(1,1)" shape-rendering="crispEdges"/><path d="M182,48 L184,48 L184,52 L188,54 L191,57 L191,65 L188,69 L175,69 L172,66 L178,63 L181.5,63 L174,56Z M184,60 L184,64 L186.5,62Z" fill="#808080" fill-rule="evenodd" shape-rendering="crispEdges"/>
<rect x="206" y="44" width="31" height="30" fill="url(#chk)" shape-rendering="crispEdges"/>
<rect x="206" y="44" width="31" height="1" fill="#808080" shape-rendering="crispEdges"/>
<rect x="206" y="44" width="1" height="29" fill="#808080" shape-rendering="crispEdges"/>
<rect x="206" y="73" width="31" height="1" fill="#fff" shape-rendering="crispEdges"/>
<rect x="236" y="44" width="1" height="30" fill="#fff" shape-rendering="crispEdges"/>
<rect x="237" y="44" width="31" height="30" fill="url(#chk)" shape-rendering="crispEdges"/>
<rect x="237" y="44" width="31" height="1" fill="#808080" shape-rendering="crispEdges"/>
<rect x="237" y="44" width="1" height="29" fill="#808080" shape-rendering="crispEdges"/>
<rect x="237" y="73" width="31" height="1" fill="#fff" shape-rendering="crispEdges"/>
<rect x="267" y="44" width="1" height="30" fill="#fff" shape-rendering="crispEdges"/>
<ellipse cx="222.5" cy="68" rx="9" ry="2" fill="#888" opacity=".45" filter="url(#b1)"/>
<path d="M222.6,48.3 C226.6,48.3 229.3,51 229.3,54.6 C229.3,57.5 227.2,59 226.9,61.5 L218.4,61.5 C218.1,59 215.9,57.5 215.9,54.6 C215.9,51 218.6,48.3 222.6,48.3Z" fill="url(#gBulb)" stroke="#5b7bbf" stroke-width="0.9"/>
<path d="M220.6,53.8 L224.2,53.8 L222.3,57.2 L222.3,60.5" fill="none" stroke="#7d9ad8" stroke-width="0.9"/>
<rect x="218.4" y="61.2" width="8.5" height="6.2" rx="1.4" fill="url(#gBase)" stroke="#b09000" stroke-width="0.6"/>
<line x1="218.6" y1="63.2" x2="226.7" y2="63.2" stroke="#a88a00" stroke-width="0.7"/>
<line x1="218.6" y1="65.2" x2="226.7" y2="65.2" stroke="#a88a00" stroke-width="0.7"/>
<rect x="220.6" y="67.2" width="4" height="1.3" fill="#555"/>
<path d="M250.5,62.6 L247.8,62.6 Q245.6,62.6 245.6,60.4 L245.6,57.6 Q245.6,55.4 247.8,55.4 L257.4,55.4 Q259.6,55.4 259.6,57.6 L259.6,60.4 Q259.6,62.6 257.4,62.6 L255.5,62.6" fill="none" stroke="#555753" stroke-width="3"/>
<path d="M250.5,62.6 L247.8,62.6 Q245.6,62.6 245.6,60.4 L245.6,57.6 Q245.6,55.4 247.8,55.4 L257.4,55.4 Q259.6,55.4 259.6,57.6 L259.6,60.4 Q259.6,62.6 257.4,62.6 L255.5,62.6" fill="none" stroke="#e4e5e2" stroke-width="1.1"/>
<polygon points="256,58.8 256,66.4 251.2,62.6" fill="#e4e5e2" stroke="#555753" stroke-width="0.9" stroke-linejoin="round"/>
<ellipse cx="282.5" cy="68.2" rx="8" ry="1.6" fill="#666" opacity=".35" filter="url(#b1)"/>
<circle cx="282.5" cy="57.8" r="10" fill="url(#gRed)" stroke="#a40000" stroke-width="0.7"/>
<path d="M278.4,53.7 L286.6,61.9 M286.6,53.7 L278.4,61.9" stroke="#fff" stroke-width="2.4" stroke-linecap="round"/>
<circle cx="322" cy="59" r="9.5" fill="url(#gSmile)" stroke="#b39600" stroke-width="1"/>
<ellipse cx="319.6" cy="56" rx="1" ry="1.9" fill="#222"/><ellipse cx="324.5" cy="56" rx="1" ry="1.9" fill="#222"/>
<path d="M315.6,60.8 Q322,68 328.4,60.8" fill="none" stroke="#5c4a00" stroke-width="1.2" stroke-linecap="round"/>
<path d="M347.2,48.6 C349,51.2 352.2,49.4 352.6,53.5" fill="none" stroke="#555" stroke-width="0.8"/>
<path d="M343.6,62.5 C343.6,56.5 347.5,52.8 352.7,52.8 C357.9,52.8 361.8,56.5 361.8,62.5 C361.8,66.5 358.8,68.2 352.7,68.2 C346.6,68.2 343.6,66.5 343.6,62.5Z" fill="url(#gMouse)" stroke="#888a85" stroke-width="0.9"/>
<path d="M344.5,59.6 Q352.7,56.6 361,59.6" fill="none" stroke="#b5b8b2" stroke-width="0.8"/>
<ellipse cx="352.7" cy="55.6" rx="1.3" ry="2.4" fill="#5f8fd6"/>
<path d="M374.4,56.2 A9.5,9.5 0 0 0 375.6,63.6" fill="none" stroke="#86a3d6" stroke-width="1.8"/>
<path d="M389.6,52.6 A10,10 0 0 1 393.4,60.4" fill="none" stroke="#4f7dc6" stroke-width="2.1"/>
<rect x="391.3" y="61" width="3" height="3.4" fill="#e02b1f" />
<path d="M375.2,55.6 L376.5,62.4 Q382.5,67.8 388.7,62.4 L389.9,55.6Z" fill="url(#gKnob)" stroke="#8f918c" stroke-width="0.8"/>
<ellipse cx="382.55" cy="55.2" rx="7.35" ry="4.7" fill="#f7f7f6" stroke="#999b96" stroke-width="0.8"/>
<rect x="404.5" y="48.5" width="10" height="5" rx="1.3" fill="#fbfbfa" stroke="#8e908b" stroke-width="1"/><rect x="406.3" y="50.3" width="6.4" height="1.1" fill="#d8d9d6"/>
<rect x="416.3" y="48.5" width="5.4" height="5" rx="1.3" fill="url(#gGreen)" stroke="#4e9a06" stroke-width="0.9"/><rect x="418.1" y="50.3" width="1.8000000000000003" height="1.2" fill="#d7f5b0"/>
<rect x="404.5" y="55.4" width="7" height="5" rx="1.3" fill="#fbfbfa" stroke="#8e908b" stroke-width="1"/><rect x="406.3" y="57.199999999999996" width="3.4" height="1.1" fill="#d8d9d6"/>
<rect x="413.4" y="55.4" width="5.2" height="5" rx="1.3" fill="#fbfbfa" stroke="#8e908b" stroke-width="1"/><rect x="415.2" y="57.199999999999996" width="1.6" height="1.1" fill="#d8d9d6"/>
<rect x="420.4" y="55.4" width="5.4" height="5" rx="1.3" fill="#fbfbfa" stroke="#8e908b" stroke-width="1"/><rect x="422.2" y="57.199999999999996" width="1.8000000000000003" height="1.1" fill="#d8d9d6"/>
<rect x="404.5" y="62.4" width="9.6" height="5.2" rx="1.3" fill="url(#gGreen)" stroke="#4e9a06" stroke-width="0.9"/><rect x="406.3" y="64.2" width="6.0" height="1.2" fill="#d7f5b0"/>
<rect x="415.4" y="62.4" width="5" height="5.2" rx="1.3" fill="#fbfbfa" stroke="#8e908b" stroke-width="1"/><rect x="417.2" y="64.2" width="1.4" height="1.1" fill="#d8d9d6"/>
<path d="M438.5,55.6 L441.5,55.6 C446,55.6 446,63.6 450.5,63.6 L452,63.6" fill="none" stroke="#4b4d49" stroke-width="3.2"/>
<path d="M438.5,63.6 L441.5,63.6 C446,63.6 446,55.6 450.5,55.6 L452,55.6" fill="none" stroke="#4b4d49" stroke-width="3.2"/>
<polygon points="450.6,51.7 455.3,55.6 450.6,59.5" fill="#eeeeec" stroke="#4b4d49" stroke-width="1" stroke-linejoin="round"/>
<polygon points="450.6,59.7 455.3,63.6 450.6,67.5" fill="#eeeeec" stroke="#4b4d49" stroke-width="1" stroke-linejoin="round"/>
<path d="M438.5,55.6 L441.5,55.6 C446,55.6 446,63.6 450.5,63.6 L452,63.6" fill="none" stroke="#eeeeec" stroke-width="1.1"/>
<path d="M438.5,63.6 L441.5,63.6 C446,63.6 446,55.6 450.5,55.6 L452,55.6" fill="none" stroke="#eeeeec" stroke-width="1.1"/>
<polygon points="536,57 543,57 539.5,60.7" fill="#000" />
<polygon points="573.4,48.9 575.39,51.76 578.55,50.28 578.84,53.76 582.32,54.05 580.84,57.21 583.7,59.2 580.84,61.19 582.32,64.35 578.84,64.64 578.55,68.12 575.39,66.64 573.4,69.5 571.41,66.64 568.25,68.12 567.96,64.64 564.48,64.35 565.96,61.19 563.1,59.2 565.96,57.21 564.48,54.05 567.96,53.76 568.25,50.28 571.41,51.76" fill="url(#gStar)" stroke="#f8a23c" stroke-width="1" stroke-linejoin="round"/>
<polygon points="573.4,50.9 575.06,53.02 577.55,52.01 577.93,54.67 580.59,55.05 579.58,57.54 581.7,59.2 579.58,60.86 580.59,63.35 577.93,63.73 577.55,66.39 575.06,65.38 573.4,67.5 571.74,65.38 569.25,66.39 568.87,63.73 566.21,63.35 567.22,60.86 565.1,59.2 567.22,57.54 566.21,55.05 568.87,54.67 569.25,52.01 571.74,53.02" fill="none" stroke="#fbbf6e" stroke-width="0.6" stroke-linejoin="round" opacity=".8"/>
<polygon points="572.5,55 574.4,55 574.4,59.4 576.6,59.4 573.45,63.2 570.3,59.4 572.5,59.4" fill="#fff" />
<path d="M593.3,66.2 L595.2,52.6 Q599.5,50.4 604,52.6 Q608.5,50.4 612.8,52.6 L614.7,66.2 Q609,64.8 604,66.8 Q599,64.8 593.3,66.2Z" fill="#fff" stroke="#3b2b40" stroke-width="1.1" stroke-linejoin="round"/>
<path d="M593,66.6 Q599,65.2 604,67.2 Q609,65.2 615,66.6" fill="none" stroke="#241a28" stroke-width="2"/>
<path d="M604,52.8 L604,66.4" stroke="#b9b9bd" stroke-width="0.8"/>
<path d="M595.6,64 Q600,62.6 603.6,64.6 M604.4,64.6 Q608,62.6 612.6,64" fill="none" stroke="#c8c8cc" stroke-width="0.9"/>
<path d="M604.6,51.5 C606.5,55.5 607.2,58 608,66" fill="none" stroke="#cc1f1f" stroke-width="1.5"/>
</svg>
<svg style="left:0px;top:0px" width="702" height="463" viewBox="0 0 702 463" style="left:0;top:0;pointer-events:none">
<path d="M37.7,240.8 C37.8,242.6 37.8,248.3 38.4,251.8 C39.0,255.3 40.2,258.6 41.6,261.8 C43.0,265.0 44.7,268.1 46.7,270.9 C48.7,273.7 51.0,276.3 53.4,278.7 C55.8,281.1 58.5,283.3 61.2,285.3 C64.0,287.3 66.9,289.1 69.9,290.8 C72.9,292.5 74.9,293.5 79.4,295.3 C83.9,297.1 90.4,299.5 97.1,301.4 C103.8,303.3 112.2,305.2 119.7,306.8 C127.2,308.4 134.8,309.6 142.3,310.7 C149.9,311.8 157.4,312.5 165.0,313.1 C172.6,313.7 180.1,314.1 187.6,314.3 C195.1,314.5 202.7,314.4 210.2,314.2 C217.7,314.0 225.3,313.6 232.8,313.1 C240.3,312.6 247.8,311.8 255.3,311.0 C262.8,310.2 270.4,309.2 277.9,308.1 C285.4,307.0 292.8,305.8 300.3,304.4 C307.8,303.0 315.3,301.6 322.7,300.0 C330.1,298.4 337.5,296.7 344.9,294.8 C352.3,292.9 359.6,291.0 366.9,288.9 C374.2,286.8 381.5,284.6 388.7,282.2 C395.9,279.8 403.1,277.3 410.2,274.7 C417.3,272.1 424.4,269.3 431.4,266.4 C438.4,263.5 445.3,260.5 452.2,257.3 C459.1,254.1 465.9,250.8 472.6,247.3 C479.3,243.8 486.0,240.2 492.6,236.5 C499.2,232.8 505.6,228.9 512.0,224.8 C518.4,220.8 524.7,216.5 530.9,212.2 C537.1,207.8 543.1,203.4 549.1,198.7 C555.1,194.0 561.0,189.2 566.8,184.2 C572.6,179.2 579.7,172.6 583.7,168.9 C587.7,165.2 589.7,163.1 590.9,161.9" fill="none" stroke="#ff0000" stroke-width="2.6"/>
<polygon points="603.8,148.6 579.2,169 587.2,176.2" fill="#ff0000" />
</svg>
</div>
</body></html>
